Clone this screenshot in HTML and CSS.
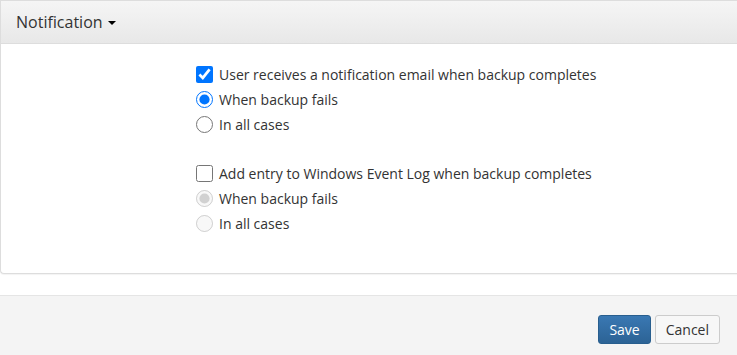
FILE: index.html
```html
<!DOCTYPE html>
<html lang="en">

<head>
    <meta charset="UTF-8">
    <title>Notification</title>
    <link rel="stylesheet" href="styles.css">
</head>

<body>
    <div class="panel">
        <div class="panel-heading">
            <span class="panel-title">Notification</span>
            <span class="caret"></span>
        </div>
        <div class="panel-body">
            <div class="group">
                <label class="option">
                    <input type="checkbox" checked>
                    <span>User receives a notification email when backup completes</span>
                </label>
                <label class="option">
                    <input type="radio" name="mail" checked>
                    <span>When backup fails</span>
                </label>
                <label class="option">
                    <input type="radio" name="mail">
                    <span>In all cases</span>
                </label>
            </div>
            <div class="group">
                <label class="option">
                    <input type="checkbox">
                    <span>Add entry to Windows Event Log when backup completes</span>
                </label>
                <label class="option">
                    <input type="radio" name="log" checked disabled>
                    <span>When backup fails</span>
                </label>
                <label class="option">
                    <input type="radio" name="log" disabled>
                    <span>In all cases</span>
                </label>
            </div>
        </div>
    </div>
    <div class="footer">
        <button class="btn btn-primary">Save</button>
        <button class="btn">Cancel</button>
    </div>
</body>

</html>
```

FILE: styles.css
```css
body {
    margin: 0;
    font-family: "Open Sans", Arial, sans-serif;
    font-size: 14px;
    color: #333;
    background-color: #fff;
}

.panel {
    width: 760px;
    border: 1px solid #ddd;
    border-right: none;
    border-radius: 0 0 4px 4px;
    background-color: #fff;
    box-shadow: 0 1px 1px rgba(0, 0, 0, 0.05);
}

.panel-heading {
    height: 42px;
    padding: 0 15px;
    display: flex;
    align-items: center;
    background: linear-gradient(#f5f5f5, #e8e8e8);
    border-bottom: 1px solid #ddd;
}

.panel-title {
    font-size: 16px;
    color: #333;
}

.caret {
    display: inline-block;
    margin-left: 5px;
    margin-top: 2px;
    border-top: 4px solid #000;
    border-left: 4px solid transparent;
    border-right: 4px solid transparent;
}

.panel-body {
    padding: 18px 0 15px 195px;
    height: 229px;
    box-sizing: border-box;
}

.group {
    display: flex;
    flex-direction: column;
    margin-bottom: 24px;
}

.option {
    display: flex;
    align-items: center;
    height: 25px;
    cursor: pointer;
}

.option input {
    width: 17px;
    height: 17px;
    margin: 0 6px 0 0;
    accent-color: #0075ff;
}

.option input:disabled + span {
    color: #333;
}

.footer {
    margin-top: 21px;
    height: 60px;
    border-top: 1px solid #e5e5e5;
    background-color: #f4f4f4;
    display: flex;
    justify-content: flex-end;
    align-items: flex-start;
    padding: 19px 17px 0 0;
    box-sizing: border-box;
    gap: 4px;
}

.btn {
    height: 29px;
    padding: 0 10px;
    font-family: "Open Sans", Arial, sans-serif;
    font-size: 14px;
    color: #333;
    background-color: #f7f7f7;
    border: 1px solid #ccc;
    border-radius: 3px;
    cursor: pointer;
}

.btn-primary {
    color: #fff;
    background: linear-gradient(#3a78b3, #2c6395);
    border-color: #285e8e;
}
```
